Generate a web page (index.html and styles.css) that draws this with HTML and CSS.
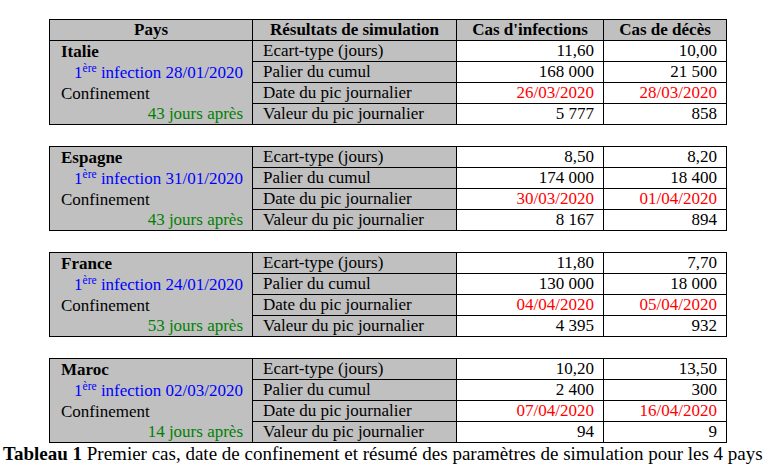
FILE: index.html
```html
<!DOCTYPE html>
<html lang="fr">
<head>
<meta charset="utf-8">
<link rel="stylesheet" href="styles.css">
</head>
<body>
<div class="page">
  <table class="sim">
    <colgroup><col class="c1"><col class="c2"><col class="c3"><col class="c4"></colgroup>
    <tr class="head"><th>Pays</th><th>Résultats de simulation</th><th>Cas d'infections</th><th>Cas de décès</th></tr>
    <tr><td class="pays" rowspan="4"><div class="name">Italie</div><div class="first">1<sup>ère</sup> infection 28/01/2020</div><div class="conf">Confinement</div><div class="after">43 jours après</div></td><td class="lab">Ecart-type (jours)</td><td class="num">11,60</td><td class="num">10,00</td></tr>
    <tr><td class="lab">Palier du cumul</td><td class="num">168 000</td><td class="num">21 500</td></tr>
    <tr><td class="lab">Date du pic journalier</td><td class="num red">26/03/2020</td><td class="num red">28/03/2020</td></tr>
    <tr><td class="lab">Valeur du pic journalier</td><td class="num">5 777</td><td class="num">858</td></tr>
  </table>
  <table class="sim">
    <colgroup><col class="c1"><col class="c2"><col class="c3"><col class="c4"></colgroup>
    <tr><td class="pays" rowspan="4"><div class="name">Espagne</div><div class="first">1<sup>ère</sup> infection 31/01/2020</div><div class="conf">Confinement</div><div class="after">43 jours après</div></td><td class="lab">Ecart-type (jours)</td><td class="num">8,50</td><td class="num">8,20</td></tr>
    <tr><td class="lab">Palier du cumul</td><td class="num">174 000</td><td class="num">18 400</td></tr>
    <tr><td class="lab">Date du pic journalier</td><td class="num red">30/03/2020</td><td class="num red">01/04/2020</td></tr>
    <tr><td class="lab">Valeur du pic journalier</td><td class="num">8 167</td><td class="num">894</td></tr>
  </table>
  <table class="sim">
    <colgroup><col class="c1"><col class="c2"><col class="c3"><col class="c4"></colgroup>
    <tr><td class="pays" rowspan="4"><div class="name">France</div><div class="first">1<sup>ère</sup> infection 24/01/2020</div><div class="conf">Confinement</div><div class="after">53 jours après</div></td><td class="lab">Ecart-type (jours)</td><td class="num">11,80</td><td class="num">7,70</td></tr>
    <tr><td class="lab">Palier du cumul</td><td class="num">130 000</td><td class="num">18 000</td></tr>
    <tr><td class="lab">Date du pic journalier</td><td class="num red">04/04/2020</td><td class="num red">05/04/2020</td></tr>
    <tr><td class="lab">Valeur du pic journalier</td><td class="num">4 395</td><td class="num">932</td></tr>
  </table>
  <table class="sim">
    <colgroup><col class="c1"><col class="c2"><col class="c3"><col class="c4"></colgroup>
    <tr><td class="pays" rowspan="4"><div class="name">Maroc</div><div class="first">1<sup>ère</sup> infection 02/03/2020</div><div class="conf">Confinement</div><div class="after">14 jours après</div></td><td class="lab">Ecart-type (jours)</td><td class="num">10,20</td><td class="num">13,50</td></tr>
    <tr><td class="lab">Palier du cumul</td><td class="num">2 400</td><td class="num">300</td></tr>
    <tr><td class="lab">Date du pic journalier</td><td class="num red">07/04/2020</td><td class="num red">16/04/2020</td></tr>
    <tr><td class="lab">Valeur du pic journalier</td><td class="num">94</td><td class="num">9</td></tr>
  </table>
  <p class="caption"><b>Tableau 1</b> Premier cas, date de confinement et résumé des paramètres de simulation pour les 4 pays</p>
</div>
</body>
</html>
```
FILE: styles.css
```css
body {
  margin: 0;
  font-family: "Liberation Serif", serif;
  font-size: 17px;
  color: #000000;
  background: #ffffff;
}
.page {
  padding: 19px 0 0 0;
}
.sim {
  border-collapse: collapse;
  table-layout: fixed;
  width: 678px;
  margin: 0 0 21px 49px;
  font-size: 17px;
}
.sim:last-of-type {
  margin-bottom: 0;
}
.c1 { width: 203px; }
.c2 { width: 204px; }
.c3 { width: 147px; }
.c4 { width: 123px; }
.sim th, .sim td {
  border: 1px solid #000000;
  padding: 0;
  line-height: 20px;
  height: 20px;
  white-space: nowrap;
  vertical-align: top;
}
.head th {
  background: #c0c0c0;
  font-weight: bold;
  text-align: center;
}
.pays {
  background: #c0c0c0;
  padding: 0 9px 0 11px !important;
}
.pays div {
  height: 21px;
  line-height: 21px;
}
.pays .name {
  font-weight: bold;
}
.pays .first {
  color: #0000ff;
  text-align: right;
}
.pays .after {
  color: #008000;
  text-align: right;
  height: 20px;
  line-height: 20px;
}
.pays sup {
  font-size: 11.5px;
  line-height: 0;
  vertical-align: 6px;
}
.lab {
  background: #c0c0c0;
  padding-left: 10px !important;
}
.num {
  text-align: right;
  padding-right: 9px !important;
}
.red {
  color: #ff0000;
}
.caption {
  margin: 0;
  padding: 0 0 0 3px;
  font-size: 19px;
  line-height: 21px;
}
```
